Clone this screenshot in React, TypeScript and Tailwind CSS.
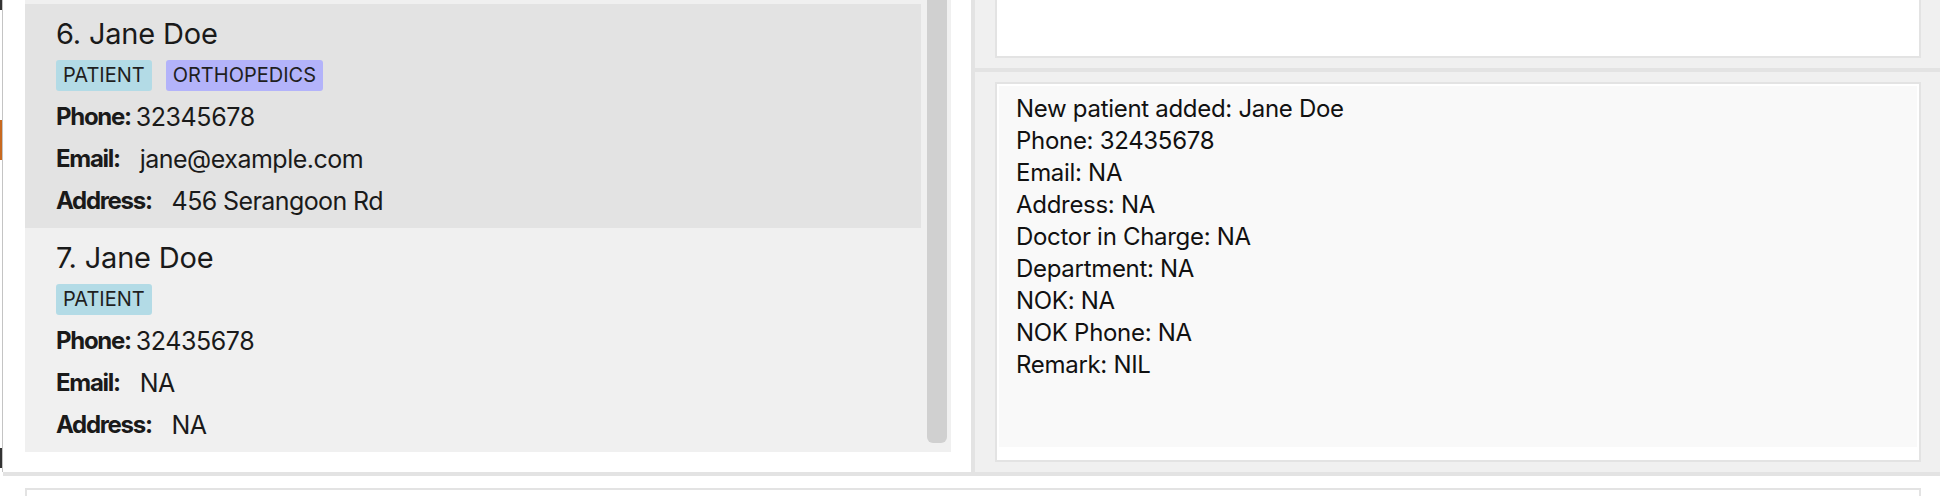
import React from 'react';

interface Person {
  index: number;
  name: string;
  tags: { label: string; color: string }[];
  phone: string;
  email: string;
  address: string;
  selected?: boolean;
}

const people: Person[] = [
  {
    index: 6,
    name: 'Jane Doe',
    tags: [
      { label: 'PATIENT', color: 'bg-[#b3dbe6]' },
      { label: 'ORTHOPEDICS', color: 'bg-[#b3b3fa]' },
    ],
    phone: '32345678',
    email: 'jane@example.com',
    address: '456 Serangoon Rd',
    selected: true,
  },
  {
    index: 7,
    name: 'Jane Doe',
    tags: [{ label: 'PATIENT', color: 'bg-[#b3dbe6]' }],
    phone: '32435678',
    email: 'NA',
    address: 'NA',
  },
];

const resultLines = [
  'New patient added: Jane Doe',
  'Phone: 32435678',
  'Email: NA',
  'Address: NA',
  'Doctor in Charge: NA',
  'Department: NA',
  'NOK: NA',
  'NOK Phone: NA',
  'Remark: NIL',
];

const PersonCard = ({ person }: { person: Person }) => {
  return (
    <div
      className={`h-[224px] w-[896px] pl-[31px] pt-[13px] ${
        person.selected ? 'bg-[#e3e3e3]' : 'bg-[#f0f0f0]'
      }`}
    >
      {/* Name */}
      <div className="text-[29px] leading-[34px] tracking-[-0.2px]">
        {person.index}. {person.name}
      </div>

      {/* Tags */}
      <div className="mt-[9px] flex gap-[14px]">
        {person.tags.map((tag) => (
          <span
            key={tag.label}
            className={`h-[31px] rounded-[3px] px-[7px] text-[20px] leading-[31px] text-[#1f1f1f] ${tag.color}`}
          >
            {tag.label}
          </span>
        ))}
      </div>

      {/* Details */}
      <div className="mt-[5px] text-[24px] leading-[42px]">
        <div className="flex">
          <span className="mr-[5px] font-bold tracking-[-1.3px]">Phone:</span>
          <span className="text-[25px] tracking-[-0.4px]">{person.phone}</span>
        </div>
        <div className="flex">
          <span className="mr-[20px] font-bold tracking-[-1.3px]">Email:</span>
          <span className="text-[25px] tracking-[-0.5px]">{person.email}</span>
        </div>
        <div className="flex">
          <span className="mr-[20px] font-bold tracking-[-1.3px]">Address:</span>
          <span className="text-[25px] tracking-[-0.6px]">{person.address}</span>
        </div>
      </div>
    </div>
  );
};

const App = () => {
  return (
    <div
      className="flex h-[496px] w-[1940px] flex-col overflow-hidden bg-white text-[#1a1a1a]"
      style={{ fontFamily: 'Inter, "Noto Sans", sans-serif' }}
    >
      {/* Main area */}
      <div className="flex h-[472px]">
        {/* Cut-off window edge */}
        <div className="flex w-[3px] flex-col">
          <div className="flex h-full">
            <div className="flex w-[2px] flex-col">
              <div className="h-[10px] bg-[#333]" />
              <div className="h-[110px]" />
              <div className="h-[40px] bg-[#c8691f]" />
              <div className="h-[288px]" />
              <div className="h-[20px] bg-[#333]" />
            </div>
            <div className="w-[1px] bg-[#c4c4c4]" />
          </div>
        </div>

        {/* Person list */}
        <div className="w-[968px] bg-white pl-[22px]">
          <div className="flex h-[452px] w-[926px] bg-[#f0f0f0]">
            <div className="flex w-[896px] flex-col">
              <div className="h-[4px]" />
              {people.map((p) => (
                <PersonCard key={p.index} person={p} />
              ))}
            </div>
            <div className="ml-[6px] h-[443px] w-[20px] rounded-b-[6px] bg-[#d0d0d0]" />
          </div>
        </div>

        {/* Divider */}
        <div className="w-[4px] bg-[#e3e3e3]" />

        {/* Right panel */}
        <div className="flex flex-1 flex-col bg-[#f0f0f0]">
          <div className="h-[68px] pl-[20px] pr-[19px]">
            <div className="h-[58px] border-x-2 border-b-2 border-[#e3e3e3] bg-white" />
          </div>
          <div className="h-[4px] bg-[#e3e3e3]" />
          <div className="pl-[20px] pr-[19px] pt-[10px]">
            <div className="h-[380px] border-2 border-[#e3e3e3] bg-white pb-[13px] pl-[2px] pr-[2px] pt-[2px]">
              <div className="h-full bg-[#f9f9f9] pl-[17px] pt-[7px] text-[24px] leading-[32px] text-[#111]">
                {resultLines.map((line) => (
                  <div key={line} className="tracking-[-0.3px]">
                    {line}
                  </div>
                ))}
              </div>
            </div>
          </div>
        </div>
      </div>

      {/* Bottom divider */}
      <div className="ml-[3px] h-[4px] bg-[#e3e3e3]" />

      {/* Command box (cut off) */}
      <div className="flex-1 pl-[25px] pr-[19px] pt-[12px]">
        <div className="h-full border-x-2 border-t-2 border-[#e3e3e3] bg-white" />
      </div>
    </div>
  );
};

export default App;
